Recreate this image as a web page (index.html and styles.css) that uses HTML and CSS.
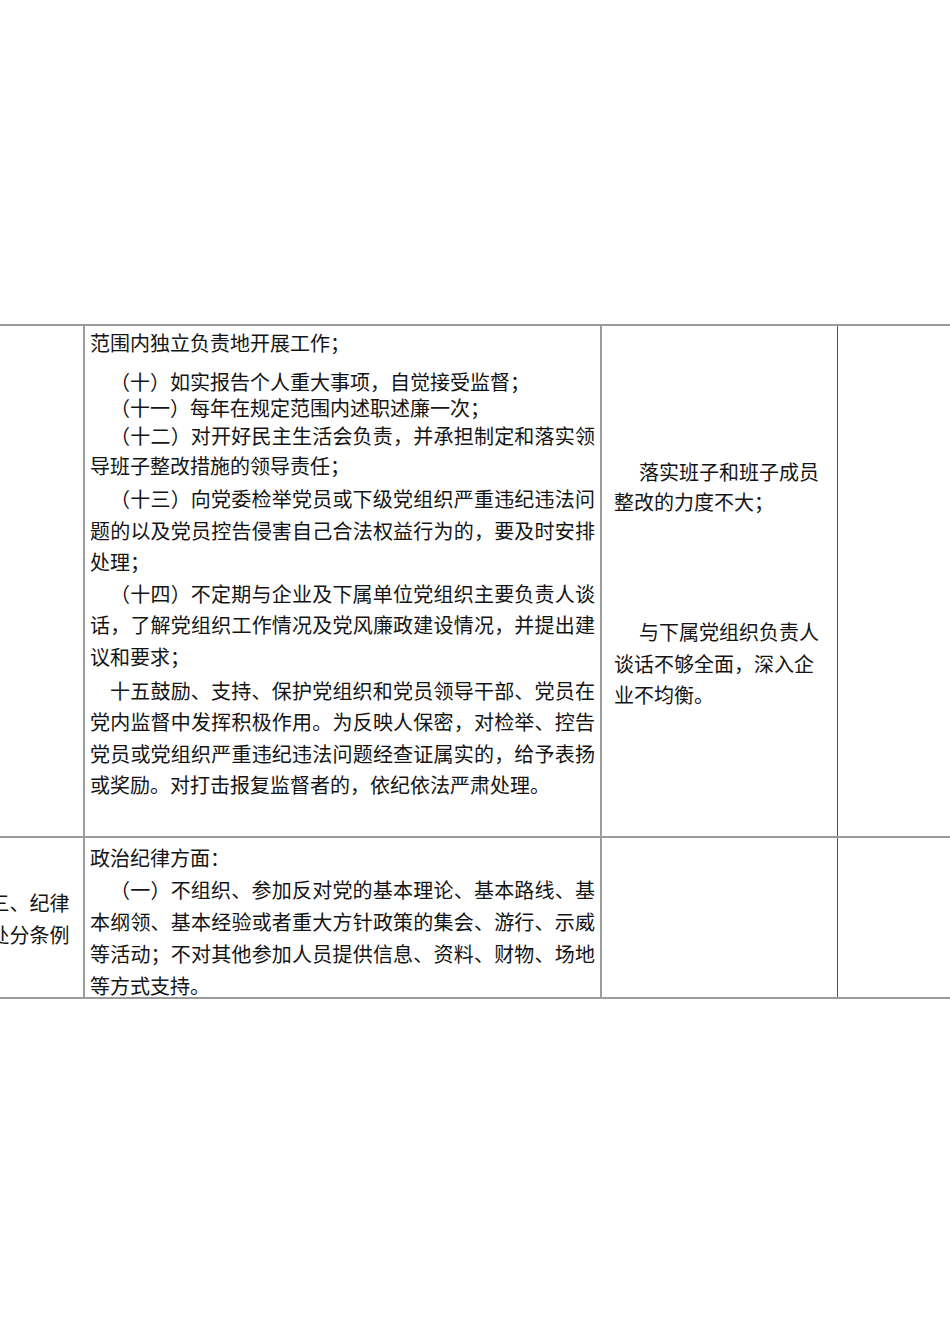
FILE: index.html
```html
<!DOCTYPE html>
<html lang="zh-CN">
<head>
<meta charset="utf-8">
<title>责任清单</title>
<link rel="stylesheet" href="styles.css">
</head>
<body>
<div class="page">
  <table class="grid">
    <colgroup>
      <col class="c-title">
      <col class="c-duty">
      <col class="c-issue">
      <col class="c-note">
    </colgroup>
    <tr class="row-one">
      <td class="cell-title"></td>
      <td class="cell-duty duty-one">
        <p class="p-first">范围内独立负责地开展工作；</p>
        <p class="p-ten ind">（十）如实报告个人重大事项，自觉接受监督；</p>
        <p class="p-eleven ind">（十一）每年在规定范围内述职述廉一次；</p>
        <p class="p-twelve ind">（十二）对开好民主生活会负责，并承担制定和落实领导班子整改措施的领导责任；</p>
        <p class="p-std p-gap ind">（十三）向党委检举党员或下级党组织严重违纪违法问题的以及党员控告侵害自己合法权益行为的，要及时安排处理；</p>
        <p class="p-std ind">（十四）不定期与企业及下属单位党组织主要负责人谈话，了解党组织工作情况及党风廉政建设情况，并提出建议和要求；</p>
        <p class="p-std p-gap ind">十五鼓励、支持、保护党组织和党员领导干部、党员在党内监督中发挥积极作用。为反映人保密，对检举、控告党员或党组织严重违纪违法问题经查证属实的，给予表扬或奖励。对打击报复监督者的，依纪依法严肃处理。</p>
      </td>
      <td class="cell-issue">
        <p class="issue-a ind-issue">落实班子和班子成员整改的力度不大；</p>
        <p class="issue-b ind-issue">与下属党组织负责人谈话不够全面，深入企业不均衡。</p>
      </td>
      <td class="cell-note"></td>
    </tr>
    <tr class="row-two">
      <td class="cell-title title-two">三、纪律处分条例</td>
      <td class="cell-duty duty-two">
        <p class="p-two">政治纪律方面：</p>
        <p class="p-two p-last ind">（一）不组织、参加反对党的基本理论、基本路线、基本纲领、基本经验或者重大方针政策的集会、游行、示威等活动；不对其他参加人员提供信息、资料、财物、场地等方式支持。</p>
      </td>
      <td class="cell-issue"></td>
      <td class="cell-note"></td>
    </tr>
  </table>
</div>
</body>
</html>
```
FILE: styles.css
```css
html, body {
  margin: 0;
  padding: 0;
  background: #ffffff;
}

body {
  font-family: "Noto Sans CJK SC", "Noto Sans", sans-serif;
  font-size: 20px;
  color: #141414;
  overflow: hidden;
  text-spacing-trim: space-all;
}

.page {
  padding-top: 324px;
}

.grid {
  border-collapse: collapse;
  table-layout: fixed;
  width: 1011px;
  margin-left: -24px;
}

.c-title { width: 108px; }
.c-duty { width: 517px; }
.c-issue { width: 236px; }
.c-note { width: 150px; }

.grid td {
  border-top: 2px solid #9c9c9c;
  border-bottom: 2px solid #9c9c9c;
  padding: 0;
  vertical-align: top;
}

.cell-title {
  border-right: 2px solid #9c9c9c;
}

.cell-duty {
  border-left: 2px solid #9c9c9c;
  border-right: 2px solid #9c9c9c;
  padding: 0 5px 0 5px !important;
  text-align: justify;
}

.cell-issue {
  border-left: 2px solid #9c9c9c;
  border-right: 1px solid #555555;
  padding: 0 10px 0 12px !important;
  text-align: left;
}

.cell-note {
  border-left: 1px solid #555555;
}

.row-one td { height: 509px; }
.row-two td { height: 155px; }

p {
  margin: 0;
}

.ind { text-indent: 1em; }
.ind-issue { text-indent: 25px; }

.duty-one { padding-top: 1px !important; }

.p-first { line-height: 32px; }
.p-ten { line-height: 27px; margin-top: 9px; }
.p-eleven { line-height: 26px; }
.p-twelve { line-height: 30px; }
.p-std { line-height: 31.6px; }
.p-gap { margin-top: 2px; }

.issue-a { line-height: 30px; margin-top: 131px; }
.issue-b { line-height: 31.7px; margin-top: 99px; }

.duty-two { padding-top: 4px !important; }
.p-two { line-height: 32px; }
.p-last { height: 123px; }

.title-two {
  vertical-align: middle !important;
  text-align: center;
  padding: 3px 12px 0 12px !important;
  line-height: 32px;
}
```
